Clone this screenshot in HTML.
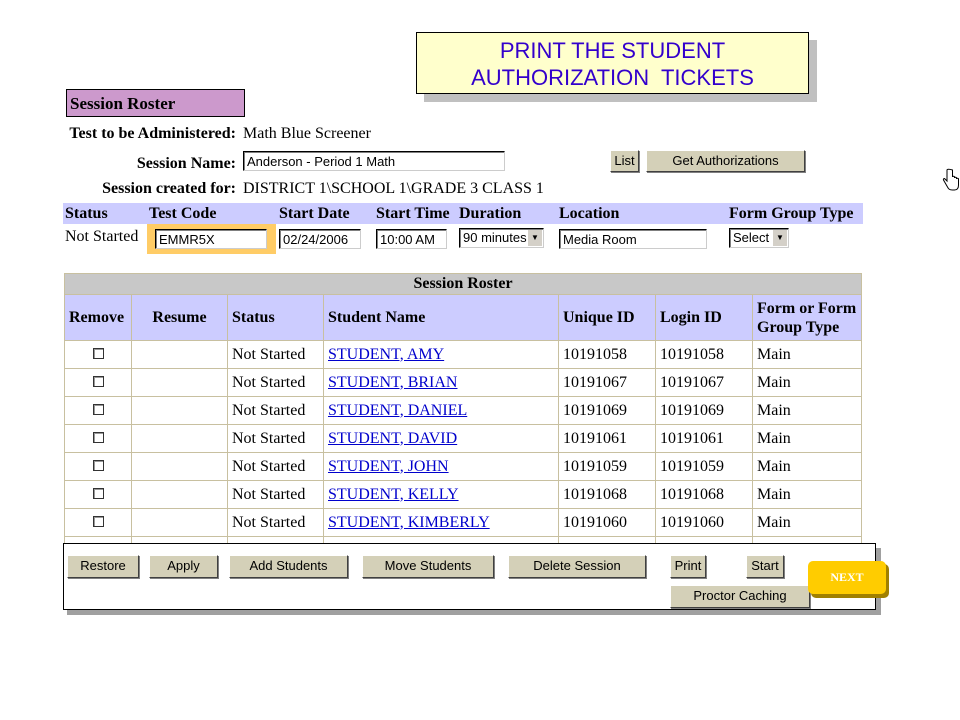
<!DOCTYPE html>
<html><head><meta charset="utf-8"><style>
body{margin:0;width:960px;height:720px;background:#fff;position:relative;overflow:hidden;font-family:"Liberation Serif",serif;font-size:16px;color:#000}
.a{position:absolute;white-space:nowrap}
.b{font-weight:bold}
.r{text-align:right;width:200px}
.inp{position:absolute;border:1px solid #000;border-right-color:#ccc;border-bottom-color:#ccc;box-shadow:inset 1px 1px 0 #808080;background:#fff;font-family:"Liberation Sans",sans-serif;font-size:13px;padding:2px 3px;box-sizing:border-box;line-height:15px}
.btn{position:absolute;background:#d4d0b8;border:1px solid;border-color:#fff #404040 #404040 #fff;box-shadow:1px 1px 0 #808080;font-family:"Liberation Sans",sans-serif;font-size:13px;text-align:center;box-sizing:border-box;line-height:20px}
table{position:absolute;left:64px;top:273px;border-collapse:collapse;width:798px}
td{border:1px solid #c8c0a0;padding:0 4px;height:27px;font-size:16px;white-space:nowrap}
.h td{background:#ccccff;font-weight:bold;height:45px}
a{color:#0000cc;text-decoration:underline}
.cb{display:inline-block;width:9px;height:9px;border:1px solid #333;box-shadow:inset 1px 1px 0 #999;background:#fff}
</style></head><body>
<div class="a" style="left:424px;top:40px;width:393px;height:62px;background:#c0c0c0"></div>
<div class="a" style="left:416px;top:32px;width:393px;height:62px;background:#ffffcc;border:1px solid #000;font-family:'Liberation Sans',sans-serif;font-size:22px;color:#3300cc;text-align:center;line-height:27px;padding-top:4px;box-sizing:border-box">PRINT THE STUDENT<br>AUTHORIZATION&nbsp; TICKETS</div>

<div class="a b" style="left:66px;top:89px;width:179px;height:28px;background:#cc99cc;border:1px solid #000;font-size:17px;line-height:27px;padding-left:3px;box-sizing:border-box">Session Roster</div>

<div class="a b r" style="left:36px;top:125px">Test to be Administered:</div>
<div class="a" style="left:243px;top:125px">Math Blue Screener</div>
<div class="a b r" style="left:36px;top:155px">Session Name:</div>
<div class="inp" style="left:243px;top:151px;width:262px;height:20px">Anderson - Period 1 Math</div>
<div class="btn" style="left:610px;top:150px;width:29px;height:22px">List</div>
<div class="btn" style="left:646px;top:150px;width:159px;height:22px">Get Authorizations</div>
<div class="a b r" style="left:36px;top:180px">Session created for:</div>
<div class="a" style="left:243px;top:180px">DISTRICT 1\SCHOOL 1\GRADE 3 CLASS 1</div>

<div class="a" style="left:63px;top:203px;width:800px;height:21px;background:#ccccff"></div>
<div class="a b" style="left:65px;top:205px">Status</div>
<div class="a b" style="left:149px;top:205px">Test Code</div>
<div class="a b" style="left:279px;top:205px">Start Date</div>
<div class="a b" style="left:376px;top:205px">Start Time</div>
<div class="a b" style="left:459px;top:205px">Duration</div>
<div class="a b" style="left:559px;top:205px">Location</div>
<div class="a b" style="left:729px;top:205px">Form Group Type</div>
<div class="a" style="left:65px;top:228px">Not Started</div>
<div class="a" style="left:147px;top:224px;width:129px;height:30px;background:#ffcc66"></div>
<div class="inp" style="left:155px;top:229px;width:112px;height:20px">EMMR5X</div>
<div class="inp" style="left:279px;top:229px;width:82px;height:20px">02/24/2006</div>
<div class="inp" style="left:376px;top:229px;width:71px;height:20px">10:00 AM</div>
<div class="inp" style="left:459px;top:228px;width:85px;height:20px;padding-top:1px">90 minutes<span style="position:absolute;right:1px;top:1px;width:14px;height:16px;background:#d4d0c8;font-size:8px;text-align:center;line-height:16px">▼</span></div>
<div class="inp" style="left:559px;top:229px;width:148px;height:20px">Media Room</div>
<div class="inp" style="left:729px;top:228px;width:60px;height:20px;padding-top:1px">Select<span style="position:absolute;right:1px;top:1px;width:14px;height:16px;background:#d4d0c8;font-size:8px;text-align:center;line-height:16px">▼</span></div>

<table>
<tr><td colspan="7" style="background:#c8c8c8;font-weight:bold;text-align:center;height:20px">Session Roster</td></tr>
<tr class="h"><td style="width:58px">Remove</td><td style="width:87px;text-align:center">Resume</td><td style="width:87px">Status</td><td style="width:226px">Student Name</td><td style="width:88px">Unique ID</td><td style="width:88px">Login ID</td><td style="white-space:normal;line-height:19px">Form or Form Group Type</td></tr>
<tr><td align="center"><span class="cb"></span></td><td></td><td>Not Started</td><td><a>STUDENT, AMY</a></td><td>10191058</td><td>10191058</td><td>Main</td></tr>
<tr><td align="center"><span class="cb"></span></td><td></td><td>Not Started</td><td><a>STUDENT, BRIAN</a></td><td>10191067</td><td>10191067</td><td>Main</td></tr>
<tr><td align="center"><span class="cb"></span></td><td></td><td>Not Started</td><td><a>STUDENT, DANIEL</a></td><td>10191069</td><td>10191069</td><td>Main</td></tr>
<tr><td align="center"><span class="cb"></span></td><td></td><td>Not Started</td><td><a>STUDENT, DAVID</a></td><td>10191061</td><td>10191061</td><td>Main</td></tr>
<tr><td align="center"><span class="cb"></span></td><td></td><td>Not Started</td><td><a>STUDENT, JOHN</a></td><td>10191059</td><td>10191059</td><td>Main</td></tr>
<tr><td align="center"><span class="cb"></span></td><td></td><td>Not Started</td><td><a>STUDENT, KELLY</a></td><td>10191068</td><td>10191068</td><td>Main</td></tr>
<tr><td align="center"><span class="cb"></span></td><td></td><td>Not Started</td><td><a>STUDENT, KIMBERLY</a></td><td>10191060</td><td>10191060</td><td>Main</td></tr>
<tr><td></td><td></td><td></td><td></td><td></td><td></td><td></td></tr>
</table>

<div class="a" style="left:67px;top:548px;width:814px;height:67px;background:#a0a0a0"></div>
<div class="a" style="left:63px;top:543px;width:813px;height:67px;background:#fff;border:1px solid #000;box-sizing:border-box"></div>
<div class="btn" style="left:67px;top:555px;width:72px;height:23px">Restore</div>
<div class="btn" style="left:149px;top:555px;width:69px;height:23px">Apply</div>
<div class="btn" style="left:229px;top:555px;width:119px;height:23px">Add Students</div>
<div class="btn" style="left:362px;top:555px;width:132px;height:23px">Move Students</div>
<div class="btn" style="left:508px;top:555px;width:138px;height:23px">Delete Session</div>
<div class="btn" style="left:670px;top:555px;width:36px;height:23px">Print</div>
<div class="btn" style="left:746px;top:555px;width:38px;height:23px">Start</div>
<div class="btn" style="left:670px;top:585px;width:140px;height:23px">Proctor Caching</div>
<div class="a" style="left:811px;top:564px;width:78px;height:34px;background:#a08000;border-radius:5px"></div>
<div class="a b" style="left:808px;top:561px;width:78px;height:33px;background:#ffcc00;border-radius:5px;color:#fff;font-size:12px;text-align:center;line-height:33px">NEXT</div>

<svg class="a" style="left:942px;top:168px" width="20" height="24" viewBox="0 0 20 24"><path d="M5 2v11l-2-2c-1-1-2 0-1.5 1l4 7c1 2 2 3 5 3h2c3 0 4-2 4-5v-6c0-1-2-1-2 0v-1c0-1-2-1-2 0v-1c0-1-2-1-2 0V2C7.5 1 5 1 5 2z" fill="#fff" stroke="#000" stroke-width="1"/></svg>
</body></html>
